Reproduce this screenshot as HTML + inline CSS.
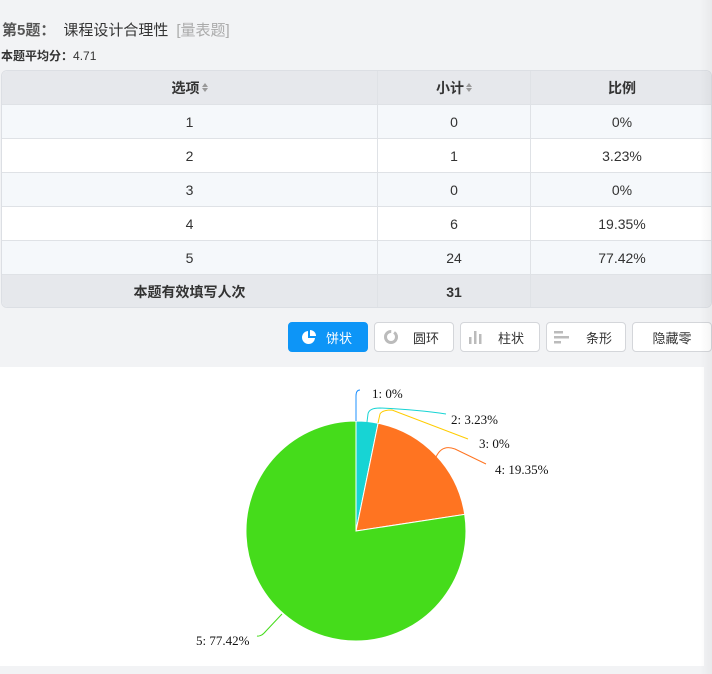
<!DOCTYPE html>
<html><head><meta charset="utf-8">
<style>
*{margin:0;padding:0;box-sizing:border-box}
body{width:712px;height:674px;background:#f2f3f5;font-family:"Liberation Sans","Noto Sans CJK SC",sans-serif;position:relative;overflow:hidden;color:#333}
.abs{position:absolute}
.tbl{left:1px;top:70px;width:711px;height:238px;border:1px solid #dcdfe4;border-radius:6px;overflow:hidden;background:#fff}
.row{position:absolute;left:0;width:100%;height:34px;border-bottom:1px solid #dfe2e6;font-size:14px;color:#333}
.row div{position:absolute;top:0;height:100%;display:flex;align-items:center;justify-content:center;border-right:1px solid #dfe2e6}
.c1{left:0;width:376px}.c2{left:376px;width:153px}.c3{left:529px;width:182px;border-right:none!important}
.hd{background:#e6e8ec;font-weight:bold}
.alt{background:#f5f8fb}
.sort{display:inline-block;width:6px;height:9px;margin-left:2px;position:relative}
.sort:before{content:"";position:absolute;top:0;left:0;border-left:3px solid transparent;border-right:3px solid transparent;border-bottom:4px solid #999}
.sort:after{content:"";position:absolute;bottom:0;left:0;border-left:3px solid transparent;border-right:3px solid transparent;border-top:4px solid #999}
.btn{position:absolute;top:322px;height:30px;width:80px;border:1px solid #d4d6da;border-radius:4px;background:#fff;font-size:13px;color:#333;display:flex;align-items:center;justify-content:center}
</style></head><body>
<div class="abs" style="left:2px;top:19px;font-size:15px;white-space:nowrap"><b style="color:#555">第5题：</b><span style="margin-left:8px;color:#333">课程设计合理性</span><span style="margin-left:8px;color:#aaa">[量表题]</span></div>
<div class="abs" style="left:1px;top:47px;font-size:12px;color:#333"><b>本题平均分：</b>4.71</div>

<div class="abs tbl">
<div class="row hd" style="top:0"><div class="c1">选项<span class="sort"></span></div><div class="c2">小计<span class="sort"></span></div><div class="c3">比例</div></div>
<div class="row alt" style="top:34px"><div class="c1">1</div><div class="c2">0</div><div class="c3">0%</div></div>
<div class="row" style="top:68px"><div class="c1">2</div><div class="c2">1</div><div class="c3">3.23%</div></div>
<div class="row alt" style="top:102px"><div class="c1">3</div><div class="c2">0</div><div class="c3">0%</div></div>
<div class="row" style="top:136px"><div class="c1">4</div><div class="c2">6</div><div class="c3">19.35%</div></div>
<div class="row alt" style="top:170px"><div class="c1">5</div><div class="c2">24</div><div class="c3">77.42%</div></div>
<div class="row hd" style="top:204px;border-bottom:none"><div class="c1">本题有效填写人次</div><div class="c2">31</div><div class="c3"></div></div>
</div>

<div class="btn" style="left:288px;background:#0d95f7;border-color:#0d95f7;color:#fff;justify-content:flex-start;padding-left:12px">
<svg width="16" height="16" viewBox="0 0 16 16"><path d="M7 2A6.5 6.5 0 1 0 14 9H7Z" fill="#fff"/><path d="M9 1V7H15A6 6 0 0 0 9 1Z" fill="#fff"/></svg><span style="margin-left:9px">饼状</span></div>
<div class="btn" style="left:374px;justify-content:flex-start;padding-left:8px">
<svg width="16" height="16" viewBox="0 0 16 16"><circle cx="8" cy="8" r="5.5" fill="none" stroke="#bbb" stroke-width="3" stroke-dasharray="26 3"/></svg><span style="margin-left:14px">圆环</span></div>
<div class="btn" style="left:460px;justify-content:flex-start;padding-left:6px">
<svg width="18" height="16" viewBox="0 0 18 16"><rect x="2" y="8" width="2.5" height="7" fill="#bbb"/><rect x="7" y="2" width="2.5" height="13" fill="#bbb"/><rect x="12" y="5" width="2.5" height="10" fill="#bbb"/></svg><span style="margin-left:13px">柱状</span></div>
<div class="btn" style="left:546px;justify-content:flex-start;padding-left:6px">
<svg width="18" height="16" viewBox="0 0 18 16"><rect x="1" y="2" width="9" height="2.5" fill="#bbb"/><rect x="1" y="7" width="15" height="2.5" fill="#bbb"/><rect x="1" y="12" width="7" height="2.5" fill="#bbb"/></svg><span style="margin-left:15px">条形</span></div>
<div class="btn" style="left:632px">隐藏零</div>

<div class="abs" style="left:0;top:367px;width:704px;height:299px;background:#fff"></div>
<div class="abs" style="left:700px;top:0;width:12px;height:674px;background:linear-gradient(90deg,rgba(0,0,0,0),rgba(0,0,0,0.04))"></div>

<svg class="abs" style="left:0;top:0" width="712" height="674">
<path d="M356 531L356 421A110 110 0 0 1 378.1 423.2Z" fill="#17d4d4" stroke="#fff" stroke-width="1"/>
<path d="M356 531L378.1 423.2A110 110 0 0 1 464.7 514.4Z" fill="#ff7421" stroke="#fff" stroke-width="1"/>
<path d="M356 531L464.7 514.4A110 110 0 1 1 356 421Z" fill="#45dc1b" stroke="#fff" stroke-width="1"/>
<g fill="none" stroke-width="1">
<path d="M356 421L356 396Q356 390 360 390" stroke="#1e90ff"/>
<path d="M367 422L368 414Q369 408 380 408Q420 410 446 414" stroke="#17d4d4"/>
<path d="M378 423L380 414Q382 410 392 410L468 439" stroke="#ffcc00"/>
<path d="M436 457Q442 444 455 449L486 464" stroke="#ff7421"/>
<path d="M282 614L266 631Q261 637 257 636" stroke="#45dc1b"/>
</g>
<g font-family="Liberation Serif,serif" font-size="13" fill="#111">
<text x="372" y="398">1: 0%</text>
<text x="451" y="424">2: 3.23%</text>
<text x="479" y="448">3: 0%</text>
<text x="495" y="474">4: 19.35%</text>
<text x="196" y="645">5: 77.42%</text>
</g>
</svg>
</body></html>
